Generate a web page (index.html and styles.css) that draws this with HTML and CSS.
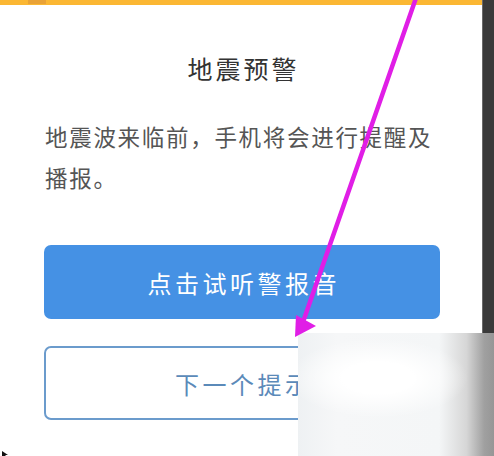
FILE: index.html
```html
<!DOCTYPE html>
<html lang="zh">
<head>
<meta charset="utf-8">
<link rel="stylesheet" href="styles.css">
</head>
<body>
<div class="screen">
  <div class="main">
    <div class="topbar"><span class="tab"></span></div>
    <div class="dialog">
      <h1 class="title">地震预警</h1>
      <p class="desc">地震波来临前，手机将会进行提醒及播报。</p>
      <button class="btn btn-primary">点击试听警报音</button>
      <button class="btn btn-outline">下一个提示</button>
    </div>
  </div>
  <div class="strip"></div>
</div>
<div class="blur"></div>
<svg class="arrow" width="494" height="456" viewBox="0 0 494 456">
  <line x1="416" y1="-2" x2="303" y2="322" stroke="#e01ee6" stroke-width="4.5" stroke-linecap="round"/>
  <polygon points="295,337 296,315 316,326" fill="#e01ee6"/>
</svg>
<svg class="cursor" width="8" height="8" viewBox="0 0 8 8"><polygon points="1,1 1,8 3,6 5,8 6,7 4,5 7,5" fill="#111"/></svg>
</body>
</html>
```
FILE: styles.css
```css
* { box-sizing: border-box; }
html, body { margin: 0; padding: 0; }
body {
  width: 494px;
  height: 456px;
  overflow: hidden;
  background: #3c3c3c;
  font-family: "Noto Sans CJK SC", "Noto Sans", sans-serif;
  position: relative;
}
.screen {
  display: grid;
  grid-template-columns: 482px 12px;
  width: 494px;
  height: 456px;
}
.main {
  min-width: 0;
  display: flex;
  flex-direction: column;
  background: #fff;
  overflow: hidden;
}
.strip {
  background: #3a3a3a;
  border-left: 1px solid #6a6a6a;
}
.topbar {
  height: 5px;
  background: #fbb733;
}
.tab {
  display: block;
  margin-left: 28px;
  width: 18px;
  height: 4px;
  background: #e9a236;
}
.dialog {
  display: flex;
  flex-direction: column;
  padding: 46px 42px 0 44px;
}
.title {
  margin: 0;
  font-size: 25px;
  font-weight: 400;
  line-height: 34px;
  letter-spacing: 3px;
  text-indent: 3px;
  color: #333;
  text-align: center;
}
.desc {
  margin: 31px 0 0 1px;
  font-size: 22.5px;
  line-height: 41px;
  letter-spacing: 1.7px;
  color: #555;
}
.btn {
  font-family: inherit;
  height: 74px;
  font-size: 24px;
  letter-spacing: 3.5px;
  text-indent: 3.5px;
  border-radius: 7px;
  padding: 0;
  cursor: pointer;
}
.btn-primary {
  margin-top: 47px;
  background: #4591e4;
  border: none;
  color: #fff;
}
.btn-outline {
  margin-top: 27px;
  background: #fff;
  border: 2px solid #6b9bcc;
  color: #5b8ab9;
}
.blur {
  position: absolute;
  left: 298px;
  top: 333px;
  width: 196px;
  height: 123px;
  background:
    radial-gradient(ellipse 90px 40px at 80px 45px, #ffffff 40%, rgba(255,255,255,0) 100%),
    linear-gradient(90deg, #eef1f3 0%, #f6f7f8 20%, #f4f6f7 72%, #d6d6d6 86%, #a0a0a0 95%, #969696 100%);
}
.arrow {
  position: absolute;
  left: 0;
  top: 0;
  pointer-events: none;
}
.cursor {
  position: absolute;
  left: 1px;
  top: 450px;
}
```
